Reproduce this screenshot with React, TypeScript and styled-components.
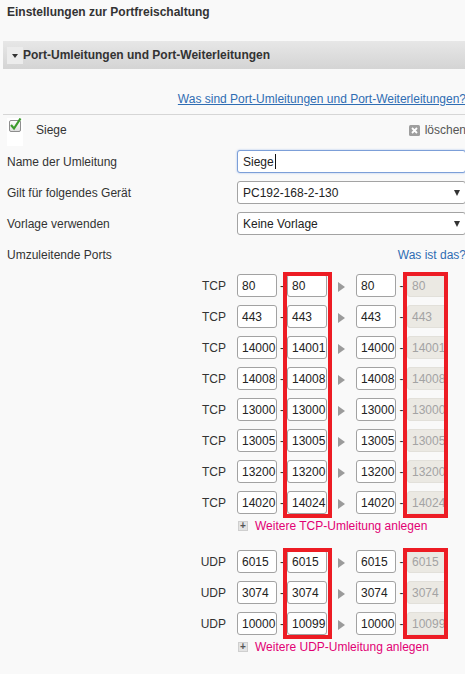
import React from 'react'
import styled, { createGlobalStyle } from 'styled-components'

const GlobalStyle = createGlobalStyle`
  html, body {
    margin: 0;
    padding: 0;
    overflow: hidden;
    background: #f9f9f9;
  }
  body {
    font-family: 'Liberation Sans', Arial, sans-serif;
    font-size: 12px;
    color: #333;
  }
`

const Page = styled.div`
  width: 466px;
  height: 674px;
  background: #f9f9f9;
`

const Title = styled.div`
  padding-left: 7px;
  line-height: 24px;
  font-weight: bold;
  margin-bottom: 17px;
`

const Panel = styled.div`
  margin-left: 3px;
`

const SectionHeader = styled.div`
  height: 28px;
  display: flex;
  align-items: center;
  padding-left: 4px;
  background: linear-gradient(#e7e7e7, #d4d4d4);
  font-weight: bold;
  white-space: nowrap;
`

const Toggle = styled.span`
  width: 16px;
  height: 17px;
  margin-top: 1px;
  background: #ececec;
  display: flex;
  align-items: center;
  justify-content: center;
  &::after {
    content: '';
    border-top: 4px solid #333;
    border-left: 3.5px solid transparent;
    border-right: 3.5px solid transparent;
  }
`

const HelpRow = styled.div`
  padding: 22px 0 7px;
  line-height: 16px;
  text-align: right;
  white-space: nowrap;
  border-bottom: 1px solid #d6d6d6;
`

const Link = styled.a`
  color: #2f6db3;
  text-decoration: underline;
  cursor: pointer;
`

const PlainLink = styled(Link)`
  text-decoration: none;
`

const Content = styled.div`
  padding-left: 4px;
`

const CheckRow = styled.div`
  height: 31px;
  display: flex;
  align-items: flex-start;
`

const CheckCell = styled.div`
  width: 16px;
  height: 28px;
  margin-top: 3px;
  background: #fff;
  padding: 0 0 0 1px;
  box-sizing: border-box;
`

const EntryName = styled.span`
  flex: 1;
  line-height: 31px;
  margin-left: 13px;
`

const Delete = styled.span`
  display: flex;
  align-items: center;
  gap: 5px;
  line-height: 31px;
  color: #555;
  white-space: nowrap;
`

const FormRow = styled.div`
  height: 31px;
  display: grid;
  grid-template-columns: 230px 1fr;
  align-items: center;
`

const FieldLabel = styled.span`
  white-space: nowrap;
`

const TextBox = styled.div`
  height: 23px;
  box-sizing: border-box;
  border: 1px solid #7c9fd8;
  border-radius: 3px;
  box-shadow: 0 0 2px rgba(90, 140, 220, 0.6);
  background: #fff;
  padding: 0 5px;
  display: flex;
  align-items: center;
  color: #222;
`

const Caret = styled.span`
  width: 1px;
  height: 15px;
  margin-left: 1px;
  background: #111;
`

const SelectBox = styled.div`
  height: 23px;
  box-sizing: border-box;
  border: 1px solid #a3a3a3;
  border-radius: 3px;
  background: #fff;
  padding: 0 5px 0 5px;
  display: flex;
  align-items: center;
  justify-content: space-between;
  color: #222;
  &::after {
    content: '';
    margin-top: 1px;
    border-top: 6px solid #333;
    border-left: 3.5px solid transparent;
    border-right: 3.5px solid transparent;
  }
`

const HelpRight = styled.span`
  text-align: right;
  white-space: nowrap;
`

const PortGroup = styled.div`
  position: relative;
`

const PortRow = styled.div`
  height: 31px;
  display: grid;
  grid-template-columns: 230px 40px 10px 40px 29px 40px 11px 40px;
  align-items: center;
`

const Proto = styled.span`
  text-align: right;
  padding-right: 11px;
`

const PortInput = styled.div<{ $disabled?: boolean }>`
  height: 23px;
  box-sizing: border-box;
  border: 1px solid ${(p) => (p.$disabled ? '#e2e0da' : '#a2a2a2')};
  border-radius: 3px;
  background: ${(p) => (p.$disabled ? '#ebe9e3' : '#fff')};
  color: ${(p) => (p.$disabled ? '#a3a3a3' : '#222')};
  padding-left: 4px;
  display: flex;
  align-items: center;
  overflow: hidden;
  white-space: nowrap;
`

const Dash = styled.span`
  text-align: center;
`

const Arrow = styled.span`
  width: 0;
  height: 0;
  margin: 3px 0 0 11px;
  border-left: 7px solid #9b9b9b;
  border-top: 5px solid transparent;
  border-bottom: 5px solid transparent;
`

const RedMark = styled.div<{ $left: number; $width: number }>`
  position: absolute;
  top: 2px;
  bottom: 0;
  left: ${(p) => p.$left}px;
  width: ${(p) => p.$width}px;
  box-sizing: border-box;
  border: 4px solid #ed1c24;
  pointer-events: none;
`

const AddRow = styled.div<{ $gap?: number }>`
  height: 15px;
  display: flex;
  align-items: center;
  gap: 7px;
  padding-left: 231px;
  margin-bottom: ${(p) => p.$gap ?? 0}px;
  color: #e20074;
  white-space: nowrap;
`

const PlusBox = styled.span`
  width: 10px;
  height: 10px;
  box-sizing: border-box;
  background: #e4e4e4;
  border: 1px solid #cfcfcf;
  display: flex;
  align-items: center;
  justify-content: center;
  color: #555;
  font-size: 10px;
  font-weight: bold;
  line-height: 1;
`

type Port = [string, string, string, string]

const tcpPorts: Port[] = [
  ['80', '80', '80', '80'],
  ['443', '443', '443', '443'],
  ['14000', '14001', '14000', '14001'],
  ['14008', '14008', '14008', '14008'],
  ['13000', '13000', '13000', '13000'],
  ['13005', '13005', '13005', '13005'],
  ['13200', '13200', '13200', '13200'],
  ['14020', '14024', '14020', '14024'],
]

const udpPorts: Port[] = [
  ['6015', '6015', '6015', '6015'],
  ['3074', '3074', '3074', '3074'],
  ['10000', '10099', '10000', '10099'],
]

const CheckIcon = () => (
  <svg width="14" height="14" viewBox="0 0 14 14">
    <defs>
      <linearGradient id="cb" x1="0" y1="0" x2="0" y2="1">
        <stop offset="0" stopColor="#ffffff" />
        <stop offset="1" stopColor="#dcdcdc" />
      </linearGradient>
    </defs>
    <rect x="1.5" y="2.5" width="11" height="11" rx="1.5" fill="url(#cb)" stroke="#8e8e8e" />
    <path d="M3 7 L6 10.5 L12.5 0.5" fill="none" stroke="#3c9b2c" strokeWidth="2.2" />
  </svg>
)

const DeleteIcon = () => (
  <svg width="11" height="11" viewBox="0 0 11 11">
    <rect width="11" height="11" rx="1.5" fill="#9e9e9e" />
    <path d="M3 3 L8 8 M8 3 L3 8" stroke="#fff" strokeWidth="1.8" />
  </svg>
)

const PortRows = ({ proto, ports }: { proto: string; ports: Port[] }) => (
  <PortGroup>
    {ports.map((p, i) => (
      <PortRow key={i}>
        <Proto>{proto}</Proto>
        <PortInput>{p[0]}</PortInput>
        <Dash>-</Dash>
        <PortInput>{p[1]}</PortInput>
        <Arrow />
        <PortInput>{p[2]}</PortInput>
        <Dash>-</Dash>
        <PortInput $disabled>{p[3]}</PortInput>
      </PortRow>
    ))}
    <RedMark $left={276} $width={49} />
    <RedMark $left={396} $width={45} />
  </PortGroup>
)

const App = () => (
  <Page>
    <GlobalStyle />
    <Title>Einstellungen zur Portfreischaltung</Title>
    <Panel>
      <SectionHeader>
        <Toggle />
        Port-Umleitungen und Port-Weiterleitungen
      </SectionHeader>
      <HelpRow>
        <Link>Was sind Port-Umleitungen und Port-Weiterleitungen?</Link>
      </HelpRow>
      <Content>
        <CheckRow>
          <CheckCell>
            <CheckIcon />
          </CheckCell>
          <EntryName>Siege</EntryName>
          <Delete>
            <DeleteIcon />
            löschen
          </Delete>
        </CheckRow>
        <FormRow>
          <FieldLabel>Name der Umleitung</FieldLabel>
          <TextBox>
            Siege
            <Caret />
          </TextBox>
        </FormRow>
        <FormRow>
          <FieldLabel>Gilt für folgendes Gerät</FieldLabel>
          <SelectBox>PC192-168-2-130</SelectBox>
        </FormRow>
        <FormRow>
          <FieldLabel>Vorlage verwenden</FieldLabel>
          <SelectBox>Keine Vorlage</SelectBox>
        </FormRow>
        <FormRow>
          <FieldLabel>Umzuleitende Ports</FieldLabel>
          <HelpRight>
            <PlainLink>Was ist das?</PlainLink>
          </HelpRight>
        </FormRow>
        <PortRows proto="TCP" ports={tcpPorts} />
        <AddRow $gap={13}>
          <PlusBox>+</PlusBox>
          Weitere TCP-Umleitung anlegen
        </AddRow>
        <PortRows proto="UDP" ports={udpPorts} />
        <AddRow>
          <PlusBox>+</PlusBox>
          Weitere UDP-Umleitung anlegen
        </AddRow>
      </Content>
    </Panel>
  </Page>
)

export default App
